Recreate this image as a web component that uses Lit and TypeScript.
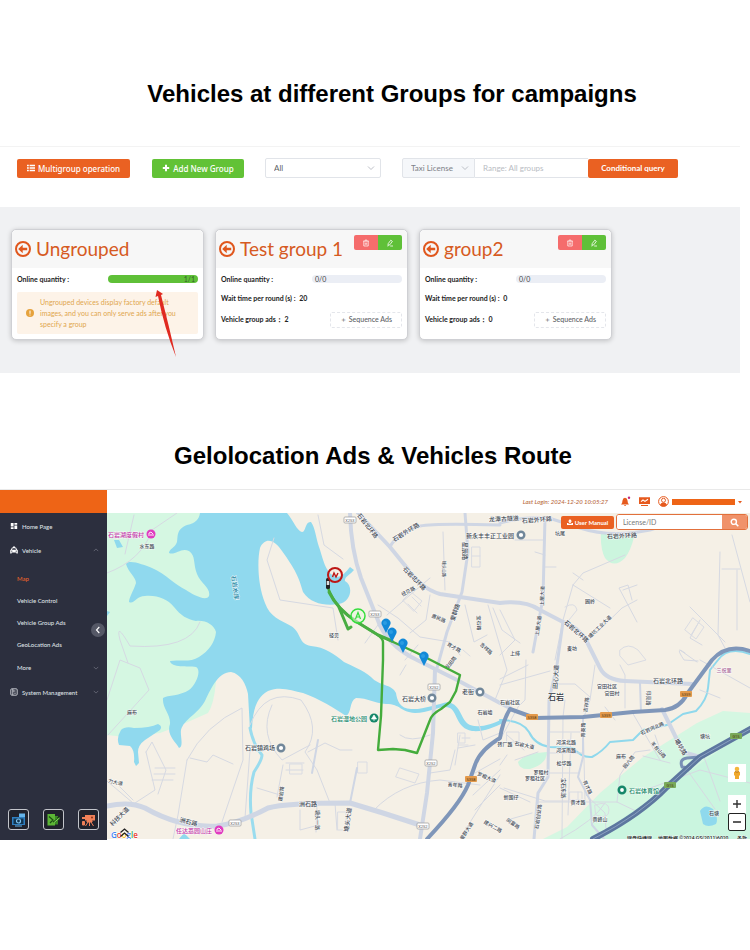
import { LitElement, html, css, svg, nothing } from "lit";
import { customElement, property } from "lit/decorators.js";

interface Group {
  name: string;
  online: string;
  wait?: string;
  ads?: string;
  note?: string;
}

const GROUPS: Group[] = [
  {
    name: "Ungrouped",
    online: "1/1",
    note: "Ungrouped devices display factory default images, and you can only serve ads after you specify a group",
  },
  { name: "Test group 1", online: "0/0", wait: "20", ads: "2" },
  { name: "group2", online: "0/0", wait: "0", ads: "0" },
];

const chevron = (cls: string) => svg`<svg class=${cls} viewBox="0 0 8 8" aria-hidden="true">
  <path d="M1 2.5 L4 5.5 L7 2.5" fill="none" stroke="currentColor" stroke-width=".9"/></svg>`;

@customElement("group-card")
class GroupCard extends LitElement {
  @property({ attribute: false }) group!: Group;

  static styles = css`
    :host { display: block; position: relative; font-family: Lato, sans-serif; color: #222; }
    .card { box-sizing: border-box; height: 111px; background: #fff; border: 1px solid #cfd0d4; border-radius: 5px; box-shadow: 0 1px 5px #0003; }
    .head { display: flex; align-items: center; box-sizing: border-box; height: 38px; padding: 0 5px 0 2px; background: #f7f7f7; border-radius: 5px 5px 0 0; }
    .back { width: 18px; height: 18px; margin-right: 4px; color: #e0571d; flex: none; }
    h3 { margin: 0; flex: 1; font-size: 19px; line-height: 28px; font-weight: 400; color: #d65a22; white-space: nowrap; }
    .acts { display: flex; align-self: flex-start; margin-top: 5px; }
    .acts button { display: grid; place-items: center; width: 24px; height: 15px; padding: 0; border: 0; color: #fff; }
    .acts svg { width: 8px; height: 8px; }
    .del { background: #f56c6c; border-radius: 2px 0 0 2px; }
    .edit { background: #5fc038; border-radius: 0 2px 2px 0; }
    .body { padding: 0 5px; }
    .row { display: flex; align-items: center; justify-content: space-between; height: 22px; font-size: 7px; font-weight: 700; }
    .row.mid { height: 16px; }
    .row.last { height: 28px; }
    .value { margin-left: 2px; }
    .bar { box-sizing: border-box; width: 90px; height: 8px; line-height: 8px; border-radius: 4px; background: #ebeef5; padding: 0 3px; font-weight: 400; color: #444; }
    .bar.full { background: #5fc038; text-align: right; color: #35612a; }
    .note { display: flex; align-items: center; gap: 6px; height: 42px; margin-top: 2px; padding: 0 9px; background: #fdf3e8; border-radius: 2px; color: #dfa64d; font-size: 7px; line-height: 11px; }
    .note p { margin: 0; width: 142px; }
    .note svg { width: 8px; height: 8px; flex: none; }
    .seq { box-sizing: border-box; width: 72px; height: 16px; padding: 0; border: 1px dashed #e4e6eb; border-radius: 2px; background: #fff; color: #606266; font: 500 7px Lato, sans-serif; }
    .arrow { position: absolute; left: 144px; top: 60px; width: 24px; height: 70px; pointer-events: none; }
  `;

  render() {
    const g = this.group;
    return html`<article class="card">
        <div class="head">
          <svg class="back" viewBox="0 0 18 18" aria-hidden="true">
            <circle cx="9" cy="9" r="7" fill="none" stroke="currentColor" stroke-width="2" />
            <path d="M4.2 9 L8.7 4.8 V7.7 H13.2 V10.3 H8.7 V13.2 Z" fill="currentColor" />
          </svg>
          <h3>${g.name}</h3>
          ${g.note
            ? nothing
            : html`<div class="acts">
                <button class="del" aria-label="Delete group">
                  <svg viewBox="0 0 8 8"><path d="M1 2.2H7M3 2V1.1H5V2M1.8 2.4V7H6.2V2.4M3.3 3.6V5.8M4.7 3.6V5.8" fill="none" stroke="currentColor" stroke-width=".7" /></svg>
                </button>
                <button class="edit" aria-label="Edit group">
                  <svg viewBox="0 0 8 8"><path d="M2.2 4.6 L4.8 1.2 L6.4 2.4 L3.8 5.8 L2 6.4 Z M4.2 7H7M1.4 7H2.2" fill="none" stroke="currentColor" stroke-width=".8" /></svg>
                </button>
              </div>`}
        </div>
        <div class="body">
          <div class="row">
            <span>Online quantity :</span>
            <span class="bar ${g.note ? "full" : ""}">${g.online}</span>
          </div>
          ${g.note
            ? html`<div class="note">
                <svg viewBox="0 0 8 8"><circle cx="4" cy="4" r="4" fill="#e6a23c" /><path d="M4 1.6V4.8M4 5.6V6.5" stroke="#fff" /></svg>
                <p>${g.note}</p>
              </div>`
            : html`<div class="row mid">
                  <span>Wait time per round (s) : <span class="value">${g.wait}</span></span>
                </div>
                <div class="row last">
                  <span>Vehicle group ads： ${g.ads}</span>
                  <button class="seq">＋ Sequence Ads</button>
                </div>`}
        </div>
      </article>
      ${g.note
        ? html`<svg class="arrow" viewBox="0 0 24 70" aria-hidden="true">
            <path d="M2 1 L0.5 8 L3 7 Q9 38 21 68 Q14 37 6 6 L8 5 Z" fill="#e02a20" />
          </svg>`
        : nothing}`;
  }
}

type Road = [string, number];

const LAKE =
  "M200 513C199 519 196 523 187 525C176 529 178 537 177 542C175 548 169 549 169 553C175 556 181 547 189 551C196 556 193 564 197 574C201 584 211 588 209 596C206 602 192 594 186 590C175 585 166 574 152 568C144 565 129 559 126 564C128 572 136 577 136 583C134 590 129 597 129 602C134 605 136 596 145 596C158 595 167 599 174 607C181 616 187 619 196 621C206 620 214 625 216 632C215 642 209 651 199 657C190 663 178 659 170 661C171 668 188 666 196 667C202 670 196 685 189 690C180 696 168 695 163 698C162 708 171 715 170 724C166 735 176 742 179 748C184 747 180 735 181 730C184 719 198 714 205 701C212 686 219 672 231 672C241 674 246 684 248 694L250 730L252 728C253 710 256 698 268 691C281 686 292 691 303 693C318 698 336 709 346 716C352 713 349 701 356 698C368 698 374 703 386 704C401 704 400 712 415 713C431 713 441 704 450 708C458 713 456 728 472 731C484 732 492 728 503 723L503 719C490 725 480 728 470 725C460 720 462 705 448 702C438 704 422 710 411 709C400 709 397 700 396 693C392 684 379 686 371 677C363 670 352 666 344 662C334 654 325 647 311 646C298 644 302 633 291 626C280 620 270 617 265 603C258 586 257 562 260 548C266 535 276 542 282 551C295 569 299 577 303 592C311 604 325 606 339 604C351 602 354 586 345 581C344 577 351 574 354 570L350 567C346 572 342 577 336 577C325 573 323 558 319 547C316 538 315 527 311 522C305 521 306 532 302 532C297 531 293 520 287 513Z";

const ARTERIES: Road[] = [
  ["M350 513Q351 550 361 578L377 618Q386 645 417 660L457 680L500 703L510 708", 4],
  ["M358 513L390 547L407 568Q420 588 440 594L500 603Q525 600 540 610L563 622Q580 628 587 642L600 668Q606 680 625 681L692 684", 4],
  ["M390 547Q396 534 420 526Q435 523 500 525M500 523Q530 515 552 519L580 528Q610 538 650 530L668 524", 3],
  ["M465 513L468 552L462 592L447 632L437 668", 3],
  ["M435 670L433 733L427 793L420 839", 4],
  ["M107 806Q130 801 145 808Q180 828 217 826Q240 823 268 808Q285 803 350 803L383 813L423 826", 5],
  ["M545 518L543 598L533 652M563 622L557 665L549 700L548 777L538 793L534 839", 3],
  ["M662 709L683 752L700 757", 4],
  ["M350 803L357 768M312 773L318 740", 2],
  ["M640 683L641 712M583 717L583 757L578 777L590 800L592 825L604 839", 2],
];

const STREETS =
  "M107 573Q142 560 152 530L177 513M125 554L134 515M128 663L120 640Q115 620 130 646Q190 650 200 622M107 700L120 660L140 668L149 690L108 735 M146 752L152 742L166 770L158 794M146 752L155 790L135 803M107 781L133 803M187 760L178 815L173 839M187 760Q205 725 242 708L243 760L222 822M190 758L207 762L213 755L233 764M155 768H175M154 774H175M152 780H173M120 787L133 800M245 818L250 750M318 515L324 545L343 559M274 538L267 560L280 600L333 608L338 640M387 615L410 595L430 578M443 532L445 590M430 595L426 620L410 633M378 605L398 618L420 637L450 642L460 655M465 605L474 642L487 635M493 608L502 630L520 643M488 605L507 670L495 700M405 660L418 645M400 675L406 665M380 622L365 643M500 610L515 640L500 655M515 540H545M535 552L545 555M545 567H556M573 573L583 580M573 585L583 573L625 555M573 585L610 608M587 642L622 608L637 600M623 590L637 585M632 600L628 585L619 588L637 622M573 585L563 620L555 660M720 552L718 635L725 648M732 535L750 602M737 570V630M690 607L725 642M700 620L690 638L702 645M722 569H740M680 650L697 662M685 653Q674 645 684 660L698 661M526 660L525 700L518 707M528 665L500 679M500 685L550 671M595 665L590 700L584 717M565 700L563 717M605 707L615 720M620 665L625 675V708M632 712L660 760M643 756L670 763M700 660L750 688M700 690L720 698M553 684H575L590 697M550 732H583M548 753H583M548 773H578M571 733L568 815M504 788L545 801H583M537 802H617L640 813M617 802L620 775L635 752L650 750M583 717L585 800M563 717L562 839M518 707L500 740M507 735L524 750M507 755L500 765M515 760L538 752M530 802L500 788M507 820L532 813M250 725Q265 687 301 700Q322 728 305 752L317 770L330 803M272 705Q258 735 282 760L310 745M308 752L325 743L340 750H352M286 763H304M286 770H303M257 788L280 795M283 765L277 797M317 805L316 832M300 810V830L315 826M335 803L337 830M374 810Q400 783 440 780L480 785M400 735Q410 743 430 735M455 750L450 770L430 773M460 735L455 765M462 738H470M458 748L475 745M475 773L500 759M473 795L500 770M475 810L500 785M462 835L500 775M478 720L483 740L500 733M655 735L662 755M680 760L715 809M645 790L700 770L750 783M704 757L720 801M605 803Q595 820 560 839M586 795L605 813L606 830";

const BLOCKS =
  "M403 600l8-8 11 9-8 10zM408 604l9 9M412 597l9 9M472 547h8v20h-8zM472 556h8M463 650l7 6M620 650q8-8 18 0l8 10-18 5-8-9zM565 607q10-6 12 3l-8 10M693 618l11 9-8 12-11-9zM699 622l-8 13M290 764h12v10h-12zM358 762h9v11h-9zM338 812h8v18h-8zM570 792h12v8h-12zM578 792v8M507 732h12v10h-12zM458 733h7v10h-7zM458 745h10M595 805q14-5 14 5t-13 5zM400 768l19 6-4 9-19-6z";

type Label = [string, number, number, number, number, string];
const INK = "#454c56";
const LABELS: Label[] = [
  ["石岩湖度假村", 126, 537, 0, 6, "#c336a8"],
  ["水东路", 147, 548, 0, 5, INK],
  ["石岩水库", 233, 588, 82, 6, "#2585a2"],
  ["麻布", 132, 714, 0, 5, INK],
  ["力大道", 115, 784, 14, 5, INK],
  ["科技大道", 121, 818, -45, 6, INK],
  ["洲石路", 188, 824, 14, 6, INK],
  ["任达荔园山庄", 194, 833, 0, 6, "#c336a8"],
  ["石岩镇鸡场", 260, 750, 0, 6, INK],
  ["洲石路", 308, 806, 0, 6, INK],
  ["建岩路", 283, 794, -83, 5, INK],
  ["塘头大道", 350, 820, -82, 6, INK],
  ["塘头一路", 316, 820, 90, 5, INK],
  ["石岩湿地公园", 349, 721, 0, 6, "#16876a"],
  ["石岩大桥", 414, 701, 0, 6, INK],
  ["老街", 468, 694, 0, 6, INK],
  ["石岩墟", 485, 714, 0, 5, INK],
  ["石岩北环路", 366, 527, 52, 6, INK],
  ["石岩外环路", 407, 534, -32, 6, INK],
  ["石岩北环路", 413, 580, 46, 6, INK],
  ["星辰路", 463, 551, 90, 6, INK],
  ["塘头山路", 442, 569, 90, 4, INK],
  ["爱群路", 457, 613, -72, 6, INK],
  ["径贝路", 409, 593, -28, 5, INK],
  ["惠民路", 438, 620, 22, 5, INK],
  ["宝石路", 477, 623, 88, 5, INK],
  ["吉祥路", 485, 650, 42, 5, INK],
  ["育才路", 453, 649, 30, 5, INK],
  ["龙田路", 452, 664, -50, 5, INK],
  ["径贝", 334, 637, 0, 5, INK],
  ["龙潭古隧道", 504, 521, -3, 6, INK],
  ["石岩外环路", 537, 522, -5, 6, INK],
  ["新永丰丰正工业园", 490, 538, 0, 6, INK],
  ["坑尾", 560, 535, 0, 5, INK],
  ["石岩外环路", 622, 538, -3, 6, INK],
  ["上屋大道", 544, 596, -88, 5, INK],
  ["上屋大道", 540, 626, -82, 5, INK],
  ["上排", 515, 655, 0, 5, INK],
  ["麦坊", 572, 650, 0, 5, INK],
  ["园岭", 590, 603, 0, 5, INK],
  ["石岩北环路", 575, 633, 42, 6, INK],
  ["塘坑工业大道", 601, 628, -44, 5, INK],
  ["石岩", 556, 700, 0, 8, "#33383f"],
  ["石岩社区", 510, 704, 0, 5, INK],
  ["田心大道", 558, 677, -87, 6, INK],
  ["官田社区", 607, 688, 0, 5, INK],
  ["官田村", 612, 695, 0, 5, INK],
  ["石岩北环路", 668, 683, 0, 6, INK],
  ["吉祥路", 588, 705, -82, 5, INK],
  ["育英路", 585, 730, -88, 5, INK],
  ["月亮路", 647, 698, 90, 5, INK],
  ["石岩河北路", 653, 730, -24, 5, INK],
  ["羊台山路", 657, 751, 50, 5, INK],
  ["塘坑路", 679, 748, 60, 6, INK],
  ["塘坑", 705, 738, 0, 5, INK],
  ["三祝里", 724, 672, 0, 5, "#ad6a9c"],
  ["河滨北路", 566, 744, 0, 5, INK],
  ["河滨南路", 566, 752, 0, 5, INK],
  ["石岩大道", 524, 747, 12, 5, INK],
  ["砖厂路", 505, 746, 0, 5, INK],
  ["松华路", 564, 765, 0, 5, INK],
  ["罗租村", 541, 774, 0, 5, INK],
  ["罗租社区", 535, 780, 0, 5, INK],
  ["新围仔", 511, 799, 0, 5, INK],
  ["宝石东路", 562, 788, 90, 5, INK],
  ["育才路", 586, 788, 65, 5, INK],
  ["黄才路", 578, 804, 0, 5, INK],
  ["麻布", 621, 758, 0, 5, INK],
  ["园六路", 630, 763, -50, 5, INK],
  ["黄峰山", 600, 821, 0, 5, INK],
  ["石岩创业路", 540, 817, -82, 5, INK],
  ["同富路", 512, 825, 35, 5, INK],
  ["石岩体育馆", 644, 793, 0, 6, "#16876a"],
  ["石塘", 714, 815, 0, 5, INK],
  ["罗租大道", 486, 779, 24, 5, INK],
  ["青年路", 455, 787, 3, 5, INK],
  ["建兴二路", 492, 828, 30, 5, INK],
  ["爱群大道", 468, 832, -58, 5, INK],
];

const SHIELDS: [string, number, number, string][] = [
  ["X253", 350, 520, "w"], ["X253", 375, 614, "w"], ["X252", 434, 687, "w"], ["X252", 431, 763, "w"],
  ["X252", 423, 826, "w"], ["X253", 235, 823, "w"], ["S358", 532, 717, "o"], ["S359", 606, 715, "o"],
  ["S359", 686, 694, "o"], ["S358", 471, 779, "o"], ["G15", 736, 736, "g"], ["G15", 670, 785, "g"],
];

const PINS = [[386, 632], [392, 641], [403, 652], [424, 665]];

@customElement("city-map")
class CityMap extends LitElement {
  static styles = css`
    :host { display: block; height: 326px; overflow: hidden; }
    .map { display: block; width: 100%; height: 100%; }
    text { font-family: Roboto, "Noto Sans CJK SC", sans-serif; text-anchor: middle; }
    .halo { font-weight: 500; paint-order: stroke; stroke: #fffc; stroke-width: 1px; }
    .line { fill: none; stroke-linecap: round; stroke-linejoin: round; }
    .logo { font-family: "Open Sans", sans-serif; font-size: 8px; font-weight: 600; text-anchor: start; paint-order: stroke; stroke: #fff; stroke-width: 1px; }
    .legal { font-size: 5px; font-weight: 500; fill: #222; text-anchor: start; paint-order: stroke; stroke: #fff9; stroke-width: 1px; }
  `;

  render() {
    return html`<svg class="map" viewBox="107 513 643 326" preserveAspectRatio="xMidYMid slice" role="img" aria-label="Map of Shiyan with the vehicle route">
      <rect x="-300" y="200" width="1500" height="1000" fill="#f5f0e6" />
      <path d="M107 513H216V682Q214 704 208 713L181 725L160 733L125 737L107 735Z" fill="#d5f7e2" />
      <path d="M750 713L723 711L697 723L643 757L600 793L567 827L543 839H750Z" fill="#d5f7e2" />
      <path d="M750 729L667 787L593 839H750Z" fill="#caf5df" />
      <path d="M518 762Q525 753 547 752Q547 764 530 769Q519 770 518 762ZM601 532L634 537Q631 550 625 558Q614 569 605 558Q600 548 601 532Z" fill="#ccf5de" />
      <path d="M700 811Q705 803 713 809Q719 818 716 824Q708 828 703 824ZM107 611V616L110 612ZM114 540L119 540 123 547 117 548ZM179 839L184 833 190 839Z" fill="#8fd9ed" />
      <path d=${LAKE} fill="#90d9ee" />
      <path d="M121 730Q125 726 134 728Q150 728 158 724Q163 726 160 730L145 740Q138 745 138 752L139 763L136 766L134 762Q135 750 130 746L119 745Q116 738 121 730Z" fill="#90d9ee" />
      <path class="line" d="M250 728Q253 744 262 755Q262 760 254 772Q249 790 251 813L255 839" stroke="#9adcee" stroke-width="3" />
      <path class="line" d="M500 720Q522 720 529 732Q535 745 550 747L573 748Q582 758 592 757Q602 752 610 742L633 740L643 730L667 725L683 714L696 711Q707 700 708 688L710 670L718 660Q728 646 750 654" stroke="#8fd8ec" stroke-width="2" />
      <path class="line" d=${STREETS} stroke="#d6d9e2" stroke-width="1" />
      <path class="line" d=${BLOCKS} stroke="#dadce3" stroke-width="1" />
      ${ARTERIES.map(([d, w]) => svg`<path class="line" d=${d} stroke="#cfd6e4" stroke-width=${w} />`)}
      <path class="line" d="M427 839Q460 804 468 785L475 765Q480 750 500 738Q503 720 510 709L535 718L583 717L633 712L665 710Q680 708 687 694L712 660Q727 643 750 651" stroke="#7f96b9" stroke-width="4" />
      <path class="line" d="M690 768L682 767Q679 759 687 758L700 757" stroke="#7890b5" stroke-width="3" />
      <path class="line" d="M752 728L700 757L667 787Q640 815 593 839" stroke="#5d779f" stroke-width="6" />
      <path class="line" d="M752 728L700 757L667 787Q640 815 593 839" stroke="#8ba0c2" stroke-width="1" />
      ${LABELS.map(
        ([t, x, y, r, s, c]) =>
          svg`<text class="halo" transform=${`translate(${x} ${y}) rotate(${r})`} font-size=${s} fill=${c}>${t}</text>`
      )}
      ${SHIELDS.map(
        ([t, x, y, k]) => svg`<g>
          <rect x=${x - 6} y=${y - 3} width="12" height="6" rx="1" fill=${k === "w" ? "#fff" : k === "o" ? "#e39a4c" : "#79a95a"} stroke=${k === "w" ? "#999" : "none"} stroke-width=".7" />
          <text x=${x} y=${y + 2} font-size="4" fill=${k === "w" ? "#555" : "#4a3510"}>${t}</text></g>`
      )}
      ${[[281, 748], [432, 698], [480, 692], [521, 535]].map(
        ([x, y]) => svg`<circle cx=${x} cy=${y} r="3.3" fill="#fff" stroke="#71879a" stroke-width="2.4" />`
      )}
      ${[[151, 534], [219, 830]].map(
        ([x, y]) => svg`<g><circle cx=${x} cy=${y} r="4.5" fill="#e03cc0" /><path d=${`M${x - 2} ${y + 2}V${y - 1}L${x} ${y - 2}L${x + 2} ${y}V${y + 2}M${x} ${y}V${y + 2}`} fill="none" stroke="#fff" stroke-width=".9" /></g>`
      )}
      <circle cx="374" cy="718" r="4.5" fill="#16876a" /><path d="M374 715L371.5 719H376.5ZM374 718V721" fill="#fff" stroke="#fff" stroke-width=".7" />
      <circle cx="622" cy="790" r="3.2" fill="#fff" stroke="#16876a" stroke-width="2.6" />
      <path class="line" d="M328 588Q336 609 357 622L378 635L417 653L460 675L456 691L450 702L441 709Q432 714 430 720L417 753L405 750L393 749L378 750L381 716L383 660V642Q383 639 378 635" stroke="#44ac3c" stroke-width="2.4" />
      <path class="line" d="M329 592Q337 609 357 622L378 635L392 641M338 605L348 629L351 627" stroke="#49ad42" stroke-width="3" />
      <rect x="326" y="578" width="4" height="11" rx="1.5" fill="#222" /><rect x="326.7" y="581" width="2.6" height="4" fill="#ddd" />
      <circle cx="335" cy="575" r="7" fill="none" stroke="#bd1715" stroke-width="2" />
      <path d="M332.5 577L334 573L336 577L338 573" fill="none" stroke="#bd1715" stroke-width="1.4" />
      <circle cx="358" cy="616" r="7" fill="#e8f7df88" stroke="#35dd3c" stroke-width="1.5" />
      <path d="M355.5 619L358 612.5L360.5 619M356.5 617H359.5" fill="none" stroke="#35dd3c" stroke-width="1.2" />
      ${PINS.map(
        ([x, y]) => svg`<g transform=${`translate(${x} ${y})`}>
          <path d="M0 1L-3.8 -6.5A4.5 4.5 0 1 1 3.8 -6.5Z" fill="#1289d8" /><circle cx="-1" cy="-9" r="2" fill="#2b9ce2" /></g>`
      )}
      <text class="logo" x="111" y="838"><tspan fill="#4285f4">G</tspan><tspan fill="#ea4335">o</tspan><tspan fill="#fbbc05">o</tspan><tspan fill="#4285f4">g</tspan><tspan fill="#34a853">l</tspan><tspan fill="#ea4335">e</tspan></text>
      <path d="M120.500 832.500L124.500 829L128.500 832.500M120.500 836.500L124.500 833L128.500 836.500" fill="none" stroke="#222" stroke-width="1.300" />
      <text class="legal" x="627" y="840">键盘快捷键</text>
      <text class="legal" x="658" y="840">地图数据 ©2024 GS(2011)6020</text>
      <text class="legal" x="737" y="840">条款</text>
    </svg>`;
  }
}

@customElement("app-root")
class AppRoot extends LitElement {
  static styles = css`
    :host { display: block; background: #fff; font-family: Lato, "Noto Sans CJK SC", sans-serif; color: #333; }
    button, input, select { font-family: inherit; margin: 0; }
    button { cursor: pointer; }
    h2 { box-sizing: border-box; margin: 0; text-align: center; font: 700 24px/28px "Liberation Sans", Arial, sans-serif; color: #000; }
    .first { height: 146px; padding: 80px 0 0 34px; }
    .second { height: 116px; padding: 69px 4px 0 0; }
    .groups { margin-right: 10px; border-top: 1px solid #f3f3f3; }
    .tools { display: flex; align-items: center; height: 42px; padding: 0 0 18px 17px; }
    .btn { display: flex; align-items: center; justify-content: center; gap: 3px; height: 19px; padding: 0; border: 0; border-radius: 2px; background: #ea6122; color: #fff; font-size: 8px; font-weight: 700; white-space: nowrap; }
    .btn svg { width: 8px; height: 8px; }
    .multi, .add { font-family: "Noto Sans", sans-serif; font-weight: 500; }
    .multi { width: 113px; margin-right: 22px; }
    .add { width: 92px; margin-right: 21px; background: #62c236; }
    .pick { position: relative; display: flex; }
    .pick select { box-sizing: border-box; height: 20px; padding: 0 18px 0 8px; border: 1px solid #e1e4e9; border-radius: 2px; background: #fff; color: #606266; font-size: 8px; appearance: none; }
    .all select { width: 116px; }
    .all { margin-right: 21px; }
    .lic select { width: 73px; border-radius: 2px 0 0 2px; background: #f5f7fa; color: #7d8087; }
    .down { position: absolute; right: 6px; top: 6px; width: 8px; height: 8px; color: #b4b8c0; pointer-events: none; }
    .range { box-sizing: border-box; width: 113px; height: 20px; padding: 0 8px; border: 1px solid #e1e4e9; border-width: 1px 0; font-size: 8px; }
    .range::placeholder { color: #b9bcc3; }
    .query { width: 90px; }
    .cards { display: grid; grid-template-columns: repeat(auto-fill, 193px); gap: 11px; box-sizing: border-box; min-height: 166px; padding: 22px 0 33px 11px; background: #f0f1f3; align-content: start; }
    .dash { display: grid; grid-template-columns: 107px 1fr; border-top: 1px solid #e9e9e9; }
    .side { position: relative; display: flex; flex-direction: column; background: #2c2f3e; }
    .brand { height: 23px; background: #ee6416; }
    .side nav { display: flex; flex-direction: column; padding-top: 1px; }
    .side a { display: flex; align-items: center; height: 22px; padding: 0 8px 0 17px; color: #dfe1e6; font-size: 6px; font-weight: 500; text-decoration: none; white-space: nowrap; }
    .side a.top { height: 24px; padding-left: 10px; }
    .side a.now { color: #e9632a; margin-top: 5px; }
    .side a.more { height: 25px; }
    .side a span { flex: 1; }
    .ico { width: 8px; height: 8px; margin-right: 4px; }
    .tick { width: 6px; height: 6px; color: #777b89; }
    .tick.up { transform: rotate(180deg); }
    .fold { position: absolute; right: 2px; top: 133px; display: grid; place-items: center; width: 14px; height: 14px; padding: 0; border: 0; border-radius: 7px; background: #555866; color: #fff; }
    .fold svg { width: 8px; height: 8px; }
    .apps { display: flex; justify-content: space-between; margin-top: auto; padding: 0 8px 10px; }
    .apps button { width: 21px; height: 21px; padding: 1px; border: 1px solid #c3c5cb; border-radius: 3px; background: #20222c; }
    .apps svg { display: block; width: 17px; height: 17px; }
    .main { padding-bottom: 1px; }
    .bar { display: flex; align-items: center; justify-content: flex-end; height: 23px; padding-right: 8px; color: #e65a1e; }
    .login { font-size: 6px; font-style: italic; font-weight: 500; color: #b8683c; margin-right: 12px; }
    .bar button { display: flex; align-items: center; padding: 0; border: 0; background: none; color: inherit; }
    .bar svg { width: 11px; height: 11px; }
    .bell { margin-right: 8px; }
    .chart { margin-right: 8px; }
    .mask { width: 63px; height: 6px; margin: 0 3px 0 3px; background: #ee6416; }
    .bar .caret { width: 4px; height: 4px; }
    .stage { position: relative; }
    .search { position: absolute; right: 2px; top: 1px; display: flex; align-items: center; }
    .manual { width: 53px; height: 13px; margin-right: 2px; font-size: 6px; gap: 2px; }
    .manual svg { width: 6px; height: 6px; }
    .field { display: flex; box-sizing: border-box; width: 132px; height: 16px; border: 1px solid #e2703c; border-radius: 3px; background: #fff; overflow: hidden; }
    .field input { flex: 1; min-width: 0; padding: 0 6px; border: 0; outline: 0; font-size: 7px; }
    .field input::placeholder { color: #777; }
    .field button { display: grid; place-items: center; width: 25px; padding: 0; border: 0; background: #f0926a; color: #fff; }
    .field svg { width: 9px; height: 9px; }
    .zoom { position: absolute; right: 4px; bottom: 8px; display: grid; gap: 0; }
    .zoom button { display: grid; place-items: center; box-sizing: border-box; width: 18px; height: 18px; padding: 0; border: 0; background: #fff; color: #333; }
    .zoom svg { width: 10px; height: 10px; }
    .zoom .man { margin-bottom: 13px; }
    .zoom .man svg { width: 12px; height: 14px; }
    .zoom .minus { border: 1px solid #222; border-radius: 2px; }
  `;

  render() {
    return html`
      <main>
        <h2 class="first">Vehicles at different Groups for campaigns</h2>
        <section class="groups">
          <div class="tools">
            <button class="btn multi">
              <svg viewBox="0 0 8 8"><path d="M0 1.5H1.8M2.6 1.5H8M0 4H1.8M2.6 4H8M0 6.5H1.8M2.6 6.5H8" stroke="currentColor" stroke-width="1.6" /></svg>
              Multigroup operation
            </button>
            <button class="btn add">
              <svg viewBox="0 0 8 8"><path d="M4 .8V7.2M.8 4H7.2" stroke="currentColor" stroke-width="2" /></svg>
              Add New Group
            </button>
            <div class="pick all">
              <select aria-label="Status"><option>All</option></select>${chevron("down")}
            </div>
            <div class="pick lic">
              <select aria-label="Search by"><option>Taxi License</option></select>${chevron("down")}
            </div>
            <input class="range" aria-label="Range" placeholder="Range: All groups" />
            <button class="btn query">Conditional query</button>
          </div>
          <div class="cards">${GROUPS.map((g) => html`<group-card .group=${g}></group-card>`)}</div>
        </section>

        <h2 class="second">Gelolocation Ads &amp; Vehicles Route</h2>
        <section class="dash">
          <aside class="side">
            <div class="brand"></div>
            <nav>
              <a class="top" href="#home">
                <svg class="ico" viewBox="0 0 8 8"><path d="M.8 1H3.6V4.4H.8ZM4.4 1H7.2V2.8H4.4ZM4.4 3.6H7.2V7H4.4ZM.8 5.2H3.6V7H.8Z" fill="#fff" /></svg>
                <span>Home Page</span>
              </a>
              <a class="top" href="#vehicle">
                <svg class="ico" viewBox="0 0 8 8"><path d="M3 .5H5V1.4H6L7 3.6L7.8 4.2V7.5H6.4V6.6H1.6V7.5H.2V4.2L1 3.6L2 1.4H3ZM2.6 2.2L2 3.7H6L5.4 2.2ZM1 4.7V5.5H2.4V4.7ZM5.6 4.7V5.5H7V4.7Z" fill="#fff" fill-rule="evenodd" /></svg>
                <span>Vehicle</span>${chevron("tick up")}
              </a>
              <a class="now" href="#map">Map</a>
              <a href="#control">Vehicle Control</a>
              <a href="#group-ads">Vehicle Group Ads</a>
              <a href="#geo-ads">GeoLocation Ads</a>
              <a class="more" href="#more"><span>More</span>${chevron("tick")}</a>
              <a class="top" href="#system">
                <svg class="ico" viewBox="0 0 8 8"><rect x=".8" y=".8" width="6.4" height="6.4" rx="1" fill="none" stroke="#d5d7dd" stroke-width=".9" /><path d="M2.8 1V7M2.8 3H5.5M5 4.5V6" stroke="#d5d7dd" stroke-width=".9" /></svg>
                <span>System Management</span>${chevron("tick")}
              </a>
            </nav>
            <button class="fold" aria-label="Collapse menu">
              <svg viewBox="0 0 8 8"><path d="M5.3 1L2.5 4L5.3 7" fill="none" stroke="currentColor" stroke-width="1.1" /></svg>
            </button>
            <div class="apps">
              <button aria-label="Camera">
                <svg viewBox="0 0 17 17"><path d="M2 6H9V4H15V14H2Z" fill="#2f7fc0" /><path d="M9 2.5H15V6H9Z" fill="#65b4ea" /><rect x="3.5" y="7.5" width="10" height="5.5" fill="#123550" /><circle cx="8.5" cy="10" r="2" fill="none" stroke="#7cc4f2" stroke-width="1.2" /><path d="M5 15H12" stroke="#65b4ea" /></svg>
              </button>
              <button aria-label="Statistics">
                <svg viewBox="0 0 17 17"><path d="M2.5 3H10V14.5H2.5Z" fill="#5cb636" /><path d="M10 5H13V13.5H10Z" fill="#3b8a25" /><path d="M4 5.5L8 9L5 12M8 11L14.5 7M12 6.5L14.5 7L14 9.5" fill="none" stroke="#1c4d12" stroke-width="1.2" /><path d="M9.5 11L14.5 7" stroke="#8be063" /></svg>
              </button>
              <button aria-label="Monitor">
                <svg viewBox="0 0 17 17"><path d="M2 6H5V4H15V9.500H5V8H2Z" fill="#f08058" /><path d="M7 9.500H12V11H7ZM8 11L5.500 15M9.500 11V15M11 11L13.500 15M2.500 10.500H4.500V14H2.500Z" fill="#f08058" stroke="#f08058" /><circle cx="12" cy="6.500" r="1" fill="#8c3318" /></svg>
              </button>
            </div>
          </aside>
          <div class="main">
            <header class="bar">
              <span class="login">Last Login: 2024-12-20 10:05:27</span>
              <button class="bell" aria-label="Alerts">
                <svg viewBox="0 0 11 11"><path d="M1 8.5Q2.5 7 2.5 4.5Q2.8 2 5 1.8Q7.2 2 7.5 4.5Q7.5 7 9 8.5ZM4 9H6.2Q5 11 4 9Z" fill="currentColor" /><circle cx="9" cy="1.7" r="1.2" fill="#c2277d" /></svg>
              </button>
              <button class="chart" aria-label="Reports">
                <svg viewBox="0 0 11 11"><path d="M0 1.3H11V8H0Z M2 9H9V10H2Z" fill="currentColor" /><path d="M2 5.6L4 4L6 5.4L9 3.2" fill="none" stroke="#fff" stroke-width="1.1" /></svg>
              </button>
              <button aria-label="Account">
                <svg viewBox="0 0 11 11"><circle cx="5.5" cy="5.5" r="4.9" fill="none" stroke="currentColor" /><circle cx="5.5" cy="4.3" r="2" fill="none" stroke="currentColor" /><path d="M2 9Q3 6.6 5.5 6.6Q8 6.6 9 9Q5.5 12 2 9Z" fill="currentColor" /></svg>
                <span class="mask"></span>
                <svg class="caret" viewBox="0 0 4 4"><path d="M0 1H4L2 3.4Z" fill="currentColor" /></svg>
              </button>
            </header>
            <div class="stage">
              <city-map></city-map>
              <div class="search">
                <button class="btn manual">
                  <svg viewBox="0 0 6 6"><path d="M3 0L5 2.5H3.8V4H2.2V2.5H1ZM0 4H1.4V4.8H4.6V4H6V6H0Z" fill="currentColor" /></svg>
                  User Manual
                </button>
                <div class="field">
                  <input aria-label="License or ID" placeholder="License/ID" />
                  <button aria-label="Search">
                    <svg viewBox="0 0 9 9"><circle cx="3.8" cy="3.8" r="2.6" fill="none" stroke="currentColor" stroke-width="1.4" /><path d="M5.8 5.8L8.3 8.3" stroke="currentColor" stroke-width="1.6" /></svg>
                  </button>
                </div>
              </div>
              <div class="zoom">
                <button class="man" aria-label="Street view">
                  <svg viewBox="0 0 12 14"><circle cx="6" cy="3" r="2.3" fill="#f4b63c" /><path d="M3 6Q6 4.4 9 6V9.5H8V13H4V9.5H3Z" fill="#f0a92c" /><path d="M4 5.6Q6 6.8 8 5.6" stroke="#b9761a" fill="none" /></svg>
                </button>
                <button aria-label="Zoom in"><svg viewBox="0 0 10 10"><path d="M5 1V9M1 5H9" stroke="currentColor" stroke-width="1.4" /></svg></button>
                <button class="minus" aria-label="Zoom out"><svg viewBox="0 0 10 10"><path d="M1 5H9" stroke="currentColor" stroke-width="1.6" /></svg></button>
              </div>
            </div>
          </div>
        </section>
      </main>
    `;
  }
}
